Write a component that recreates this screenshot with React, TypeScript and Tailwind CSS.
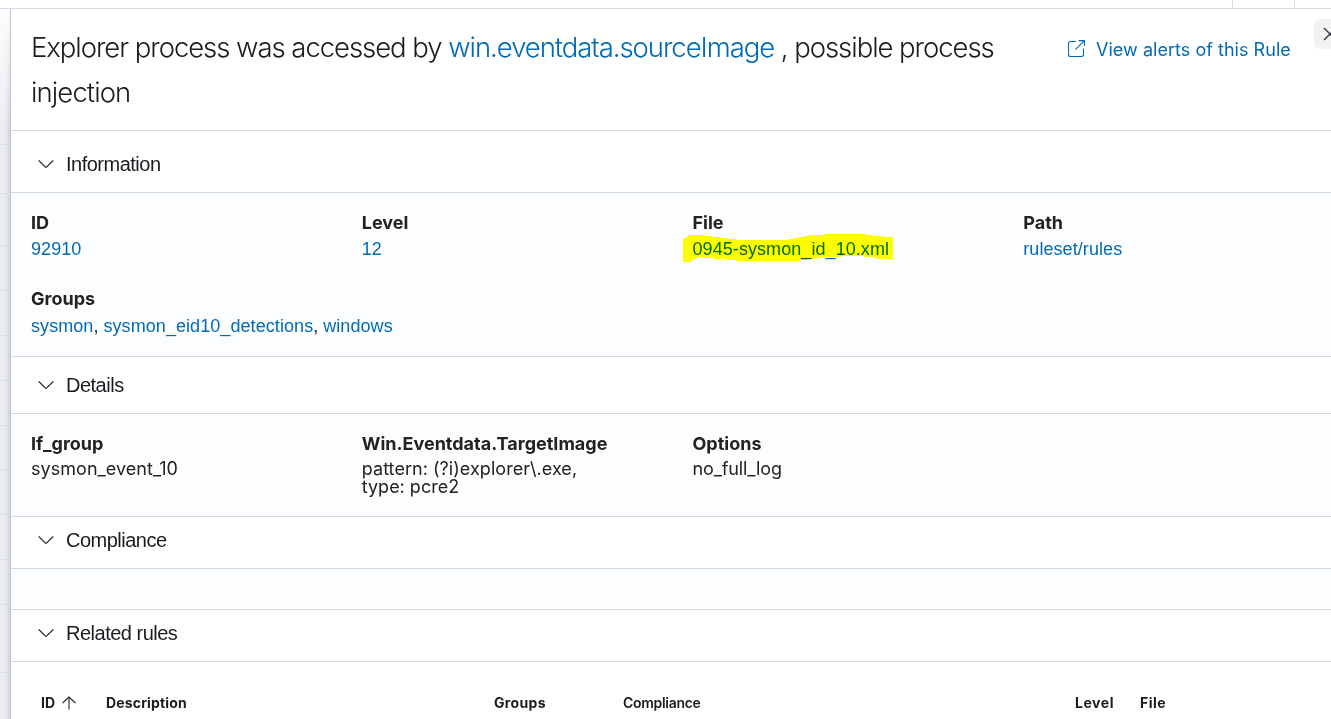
import { type ReactNode } from 'react';

const LINE = 'border-[#d3dae6]';
const BACKDROP_ROWS = [
  'h-[21px]', 'h-[115px]', 'h-[49px]', 'h-[52px]', 'h-[45px]', 'h-[45px]', 'h-[45px]',
  'h-[45px]', 'h-[44px]', 'h-[45px]', 'h-[45px]', 'h-[45px]', 'h-[68px]',
];

function Chevron() {
  return (
    <svg className="h-4 w-4 shrink-0" viewBox="0 0 16 16" fill="none" stroke="#2b2d33" strokeWidth="1.25" strokeLinecap="round" strokeLinejoin="round">
      <path d="M1 4.8 7.3 10.9a1 1 0 0 0 1.4 0L15 4.8" />
    </svg>
  );
}

function SectionHead({ title, className }: { title: string; className: string }) {
  return (
    <div className={`flex shrink-0 items-start border-b pl-[27px] ${LINE} ${className}`}>
      <div className="flex h-6 items-center gap-3">
        <Chevron />
        <h2 className="font-['Liberation_Sans',sans-serif] text-[20px] leading-6 tracking-[-0.5px] whitespace-nowrap text-[#1a1c21]">{title}</h2>
      </div>
    </div>
  );
}

function Label({ children }: { children: ReactNode }) {
  return <div className="text-[18px] leading-6 font-bold whitespace-nowrap text-[#222222]">{children}</div>;
}

function Link({ children }: { children: ReactNode }) {
  return <a className="tracking-[0.07px] whitespace-nowrap text-[#006bb4]">{children}</a>;
}

function LinkRow({ children }: { children: ReactNode }) {
  return <div className="font-['Liberation_Sans',sans-serif] text-[18px] leading-7 whitespace-nowrap">{children}</div>;
}

function Value({ children, className = 'tracking-[0.04px]' }: { children: ReactNode; className?: string }) {
  return <div className={`leading-[18px] whitespace-nowrap ${className}`}>{children}</div>;
}

export default function App() {
  return (
    <div className="relative flex h-[719px] w-[1331px] flex-col overflow-hidden bg-white font-['Inter',sans-serif] text-[#222222]">
      <header className={`flex h-[9px] shrink-0 justify-end border-b ${LINE}`}>
        <div className={`w-[62px] border-l ${LINE}`} />
        <div className={`w-[37px] border-l ${LINE}`} />
      </header>
      <div className="flex min-h-0 flex-1">
        <aside className="relative flex w-[10px] shrink-0 flex-col bg-linear-to-r from-[#eeeff1] via-[#e8eaed] via-60% to-[#cfd3da]">
          {BACKDROP_ROWS.map((h, i) => (
            <div key={i} className={`shrink-0 border-b border-[#d9e0e8] ${h}`} />
          ))}
          <div className="absolute inset-x-0 top-0 h-[120px] bg-linear-to-b from-white/90 to-white/0" />
        </aside>
        <main className="flex min-w-0 flex-1 flex-col border-l border-[#c1c8d3] bg-white">
          <div className={`relative flex h-[122px] shrink-0 border-b ${LINE}`}>
            <h1 className="w-[1057px] shrink-0 pt-[16px] pl-[20px] text-[27.5px] leading-[45px] font-light tracking-[-1.05px] text-[#1a1c21]">
              <span className="block whitespace-nowrap">
                Explorer process was accessed by <a className="text-[#006bb4]">win.eventdata.sourceImage</a> , possible process
              </span>
              <span className="tracking-[-0.9px]">injection</span>
            </h1>
            <a className="mt-[28px] flex h-6 items-start gap-[11px] self-start text-[18px] leading-6 tracking-[0.03px] whitespace-nowrap text-[#006bb4]">
              <svg className="mt-[3px] h-[17px] w-[17px]" viewBox="0 0 17 17" fill="none" stroke="currentColor" strokeWidth="1.1">
                <path d="M8 1.5H2.5a2 2 0 0 0-2 2v11a2 2 0 0 0 2 2h11a2 2 0 0 0 2-2V8.5M10.5 .6h5.9V6M16.4.6 7.3 9.7" />
              </svg>
              <span className="pt-px">View alerts of this Rule</span>
            </a>
            <button className="absolute top-[10px] left-[1303px] flex h-[30px] w-[30px] items-center rounded-[6px] bg-[#f1f2f4] pl-[9px]">
              <svg className="h-[14px] w-[14px] shrink-0" viewBox="0 0 14 14" fill="none" stroke="#343741" strokeWidth="1.4">
                <path d="M1 1l12 12M13 1 1 13" />
              </svg>
            </button>
          </div>
          <SectionHead title="Information" className="h-[62px] pt-[21px]" />
          <div className={`h-[164px] shrink-0 border-b bg-[#fcfdff] pt-[18px] pl-[20px] ${LINE}`}>
            <div className="grid w-[1323px] grid-cols-4">
              <div><Label>ID</Label><LinkRow><Link>92910</Link></LinkRow></div>
              <div><Label>Level</Label><LinkRow><Link>12</Link></LinkRow></div>
              <div className="relative">
                <Label>File</Label>
                <LinkRow><Link>0945-sysmon_id_10.xml</Link></LinkRow>
                <svg className="absolute top-[23px] left-[-9.5px] h-7 w-[211px] mix-blend-multiply" viewBox="0 0 211 28" fill="#ffff00" shapeRendering="crispEdges">
                  <path d="M0 5.3 6.5 1.3H20L43.5 4.3 58.5 6.3H100L110 4.7 127 1.3 148.5 0H180L193.5 2 210 3.3V24.5L195 25 190 23.3 177 22 150 22.7 127 25 113.5 27H60L48.5 26 17 23.3 8.5 26V27.7H0Z" />
                </svg>
              </div>
              <div><Label>Path</Label><LinkRow><Link>ruleset/rules</Link></LinkRow></div>
            </div>
            <div className="mt-6">
              <Label>Groups</Label>
              <LinkRow><span className="relative top-px"><Link>sysmon</Link>, <Link>sysmon_eid10_detections</Link>, <Link>windows</Link></span></LinkRow>
            </div>
          </div>
          <SectionHead title="Details" className="h-[57px] pt-[16px]" />
          <div className={`h-[103px] shrink-0 border-b bg-[#fcfdff] pt-[18px] pl-[20px] text-[18px] ${LINE}`}>
            <div className="grid w-[1323px] grid-cols-4">
              <div className="flex flex-col"><Label>If_group</Label><div className="pt-1"><Value>sysmon_event_10</Value></div></div>
              <div className="flex flex-col">
                <Label>Win.Eventdata.TargetImage</Label>
                <div className="pt-1">
                  <Value>pattern: (?i)explorer\.exe,</Value>
                  <Value className="tracking-[0px]">type: pcre2</Value>
                </div>
              </div>
              <div className="flex flex-col"><Label>Options</Label><div className="pt-1"><Value className="tracking-[-0.12px]">no_full_log</Value></div></div>
            </div>
          </div>
          <SectionHead title="Compliance" className="h-[52px] pt-[11px]" />
          <div className={`h-[41px] shrink-0 border-b bg-[#fcfdff] ${LINE}`} />
          <SectionHead title="Related rules" className="h-[52px] pt-[11px]" />
          <div className="flex pt-[31px] pl-[30px] text-[14px] leading-5 font-bold tracking-[0.15px] text-[#1a1c21]">
            <div className="flex w-[65px] items-center gap-[7px]">
              ID
              <svg className="h-[14px] w-[14px]" viewBox="0 0 14 14" fill="none" stroke="#343741" strokeWidth="1.2" strokeLinecap="round" strokeLinejoin="round">
                <path d="M7 13V1.2M.9 6.8 7 1l6.1 5.8" />
              </svg>
            </div>
            <div className="w-[388px]">Description</div>
            <div className="w-[129px] tracking-[0.35px]">Groups</div>
            <div className="w-[452px] font-semibold tracking-[-0.3px]">Compliance</div>
            <div className="w-[65px] tracking-[0.55px]">Level</div>
            <div className="tracking-[0.5px]">File</div>
          </div>
        </main>
      </div>
    </div>
  );
}
